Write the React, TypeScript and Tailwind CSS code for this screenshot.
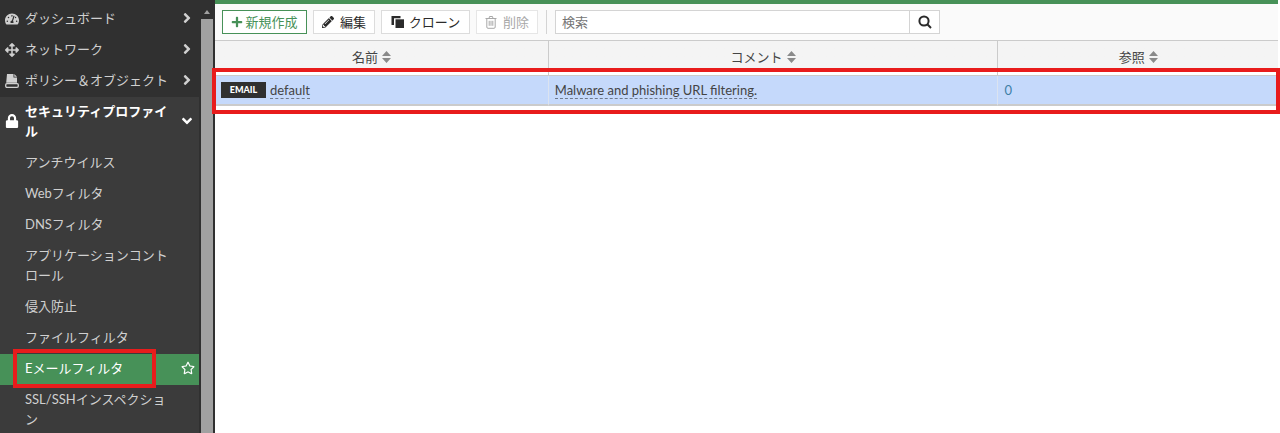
import type { ReactNode } from "react";
import {
  FaAngleDown,
  FaAngleRight,
  FaArrowsAlt,
  FaLock,
  FaPencilAlt,
  FaPlus,
  FaRegStar,
  FaTachometerAlt,
} from "react-icons/fa";

function PolicyIcon() {
  return (
    <svg viewBox="0 0 14 14" className="size-3.5" fill="currentColor">
      <path d="M2 0h6.500v3.500H12v5.200H1.200z" />
      <path d="M9.300 0 12 2.700H9.300z" />
      <rect x=".7" y="9.700" width="12.600" height="3.600" rx="1.200" fill="none" stroke="currentColor" strokeWidth="1.300" />
    </svg>
  );
}

function CloneIcon() {
  return (
    <svg viewBox="0 0 14 14" className="size-3.5" fill="currentColor">
      <path d="M.500 1h9v2.200H3V10H.500z" />
      <path d="M4.500 4.300H13V13H4.500z" />
    </svg>
  );
}

function TrashIcon() {
  return (
    <svg viewBox="0 0 12 13" className="h-[13px] w-3" fill="none" stroke="currentColor">
      <path d="M.500 2.500h11M4 2.500l.5-2h3l.5 2M1.800 2.500v8.500q0 1.300 1.200 1.300h6q1.200 0 1.200-1.300V2.500M4.200 4.800v5M6 4.800v5M7.800 4.800v5" />
    </svg>
  );
}

function SearchIcon() {
  return (
    <svg viewBox="0 0 14 14" className="size-3.5" fill="none" stroke="currentColor" strokeWidth="2">
      <circle cx="6" cy="6" r="4.600" />
      <path d="m9.300 9.300 3.700 3.700" />
    </svg>
  );
}

function SortIcon() {
  return (
    <svg viewBox="0 0 9 12" className="h-3 w-[9px]" fill="#8a8a8a">
      <path d="M4.500 0 9 5H0zM0 7h9l-4.500 5z" />
    </svg>
  );
}

const sections = [
  { label: "ダッシュボード", icon: <FaTachometerAlt className="size-3.5" /> },
  { label: "ネットワーク", icon: <FaArrowsAlt className="size-3.5" /> },
  { label: "ポリシー＆オブジェクト", icon: <PolicyIcon /> },
];

const profiles = [
  "アンチウイルス",
  "Webフィルタ",
  "DNSフィルタ",
  "アプリケーションコントロール",
  "侵入防止",
  "ファイルフィルタ",
  "Eメールフィルタ",
  "SSL/SSHインスペクション",
];

const columns = [
  { label: "名前", width: "w-[31.4%] pr-5" },
  { label: "コメント", width: "w-[42.3%] pr-5" },
  { label: "参照", width: "" },
];

function Sidebar() {
  const active = "Eメールフィルタ";

  return (
    <aside className="flex w-[215px] shrink-0 overflow-hidden bg-[#303030] text-[#d0d0d0]">
      <nav className="w-[199px] shrink-0 pt-1">
        {sections.map(({ label, icon }) => (
          <a key={label} href="#" className="flex items-center pt-1 pr-1 pb-[7px] pl-[5px]">
            <span className="w-5 shrink-0 pt-0.5">{icon}</span>
            <span className="flex-1 whitespace-nowrap">{label}</span>
            <FaAngleRight className="size-4 shrink-0" />
          </a>
        ))}
        <div className="bg-[#3b3b3b]">
          <a href="#" className="flex items-center pt-1 pr-1 pb-[7px] pl-[5px] font-bold text-white">
            <FaLock className="mr-1.5 size-3.5 shrink-0" />
            <span className="flex-1 break-all">セキュリティプロファイル</span>
            <FaAngleDown className="size-4 shrink-0" />
          </a>
          {profiles.map((label) => (
            <a
              key={label}
              href="#"
              className={`relative flex items-center pt-1 pr-1 pb-[7px] pl-[25px] ${
                label === active ? "bg-[#479158] text-white" : ""
              }`}
            >
              <span className="w-[150px] break-all">{label}</span>
              {label === active && (
                <>
                  <FaRegStar className="ml-auto size-3.5" />
                  <span className="absolute -top-[5px] left-[13px] h-[39px] w-[143px] border-4 border-[#e81c1c]" />
                </>
              )}
            </a>
          ))}
        </div>
      </nav>
      <div className="ml-0.5 flex w-3 shrink-0 flex-col items-center">
        <svg viewBox="0 0 6 4" className="mt-2.5 mb-[5px] h-1 w-1.5 shrink-0" fill="#a1a1a1">
          <path d="M3 0 6 4H0z" />
        </svg>
        <div className="w-full flex-1 bg-[#a1a1a1]" />
      </div>
    </aside>
  );
}

interface ToolButtonProps {
  children: ReactNode;
  className: string;
  disabled?: boolean;
}

function ToolButton({ children, className, disabled }: ToolButtonProps) {
  return (
    <button
      type="button"
      disabled={disabled}
      className={`flex h-6 items-center justify-center border bg-white whitespace-nowrap ${className}`}
    >
      {children}
    </button>
  );
}

function Toolbar() {
  return (
    <div className="flex h-9 items-center bg-[#fafafa] px-[7px]">
      <div className="flex gap-1.5">
        <ToolButton className="w-[85px] gap-0.5 border-[#479158] text-[#479158]">
          <FaPlus className="size-3" />
          新規作成
        </ToolButton>
        <ToolButton className="w-[62px] gap-1.5 border-[#dcdcdc] text-[#2b2b2b]">
          <FaPencilAlt className="size-3" />
          編集
        </ToolButton>
        <ToolButton className="w-[89px] gap-1 border-[#dcdcdc] text-[#2b2b2b]">
          <CloneIcon />
          クローン
        </ToolButton>
        <ToolButton disabled className="w-[62px] gap-1.5 border-[#e6e6e6] text-[#a8a8a8]">
          <TrashIcon />
          削除
        </ToolButton>
      </div>
      <span className="mx-2 h-6 w-px bg-[#d4d4d4]" />
      <form className="flex h-6 w-[385px] border border-[#d4d4d4] bg-white">
        <input
          type="text"
          aria-label="検索"
          placeholder="検索"
          className="min-w-0 flex-1 px-1.5 outline-none placeholder:text-[#757575]"
        />
        <button
          type="button"
          aria-label="検索"
          className="flex w-[30px] items-center justify-center border-l border-[#d4d4d4] text-[#2b2b2b]"
        >
          <SearchIcon />
        </button>
      </form>
    </div>
  );
}

function ProfileTable() {
  return (
    <div className="relative border-t border-[#cbcbcb]">
      <table className="w-full table-fixed border-separate border-spacing-0 text-[#444]">
        <thead>
          <tr>
            {columns.map(({ label, width }) => (
              <th
                key={label}
                className={`h-[35px] border-r border-b border-[#cbcbcb] bg-linear-to-b from-[#f4f4f4] from-90% to-white to-90% pt-0 pb-0.5 pl-0 font-normal last:border-r-0 ${width}`}
              >
                <span className="flex items-center justify-center gap-1">
                  {label}
                  <SortIcon />
                </span>
              </th>
            ))}
          </tr>
        </thead>
        <tbody>
          <tr className="bg-[#c5d9fb]">
            <td className="h-[30px] border-r border-b-2 border-r-[#dbe3f0] border-b-[#cbcbcb] p-0 pl-1.5">
              <span className="flex items-center gap-1">
                <span className="flex h-4 w-[45px] items-center justify-center bg-[#303030] text-[9px] font-black text-white">
                  EMAIL
                </span>
                <span className="border-b border-dashed border-[#6f7a8c] leading-4">default</span>
              </span>
            </td>
            <td className="border-r border-b-2 border-r-[#dbe3f0] border-b-[#cbcbcb] p-0 pl-1.5">
              <span className="flex">
                <span className="border-b border-dashed border-[#6f7a8c] leading-4">
                  Malware and phishing URL filtering.
                </span>
              </span>
            </td>
            <td className="border-b-2 border-[#cbcbcb] p-0 pl-1.5">
              <a href="#" className="text-[#3f7fa6]">
                0
              </a>
            </td>
          </tr>
        </tbody>
      </table>
      <span className="pointer-events-none absolute top-[27px] -right-0.5 -left-[3px] h-[46px] border-4 border-[#e81c1c]" />
    </div>
  );
}

export default function App() {
  return (
    <div className="flex h-screen overflow-hidden bg-white font-['Lato','Noto_Sans_CJK_JP',sans-serif] text-[13px] leading-5">
      <Sidebar />
      <main className="mr-0.5 min-w-0 flex-1 border-t-4 border-[#479158]">
        <Toolbar />
        <ProfileTable />
      </main>
    </div>
  );
}
